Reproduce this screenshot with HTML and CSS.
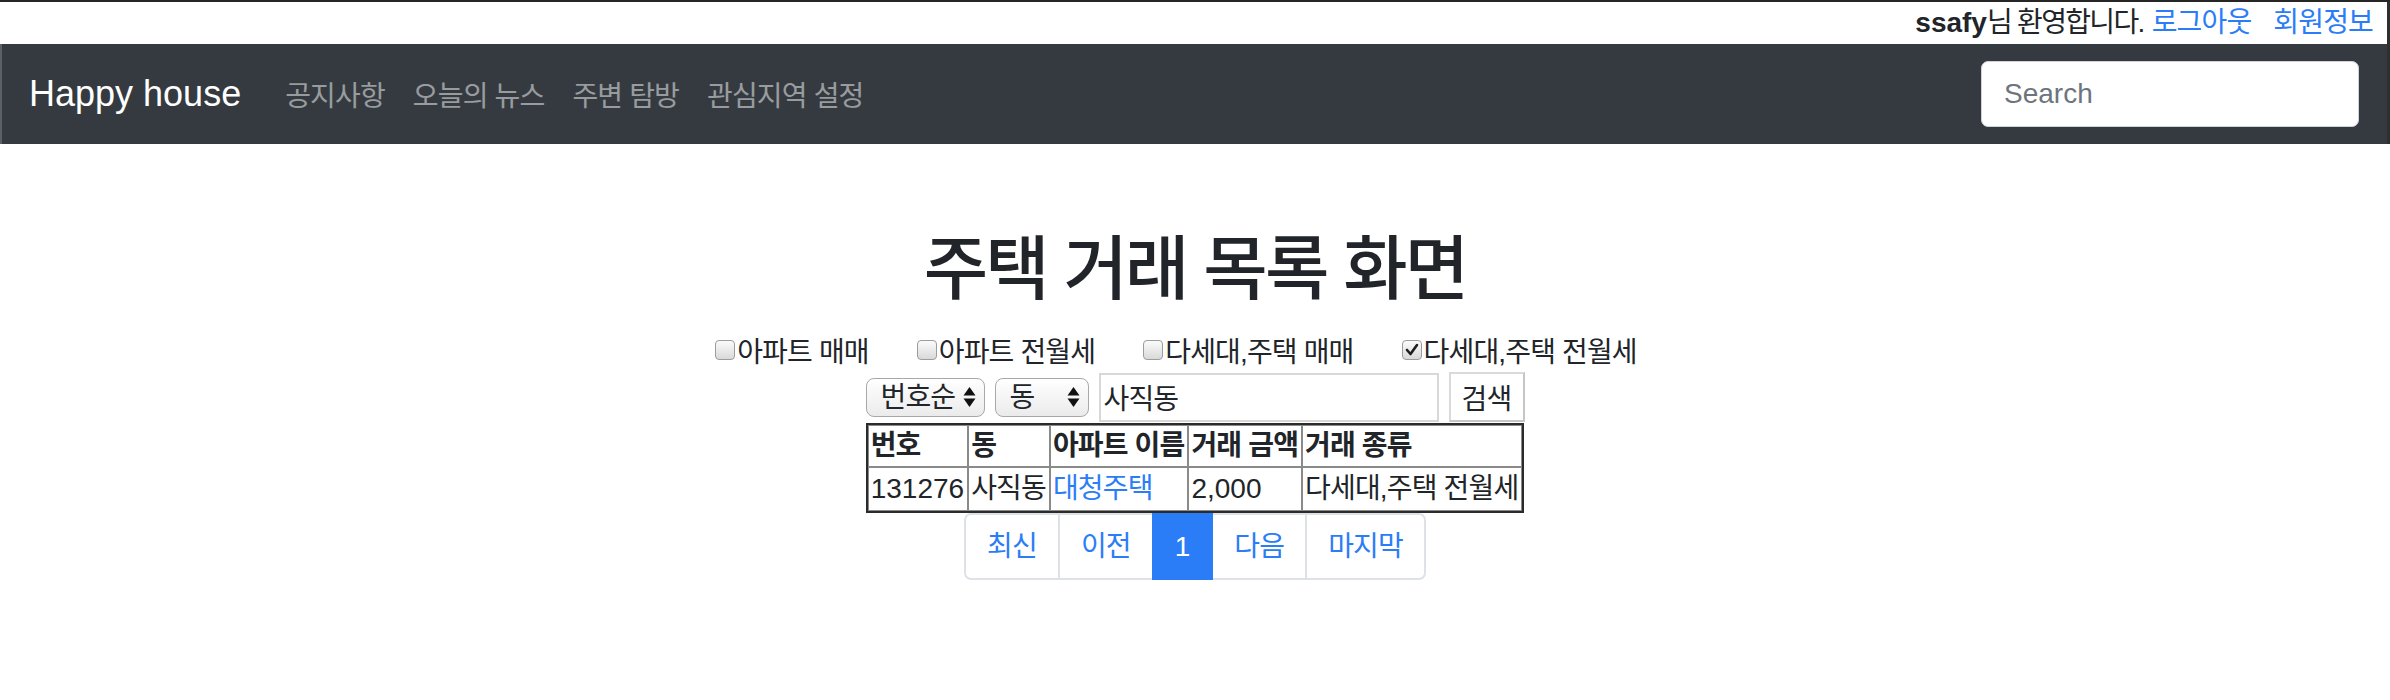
FILE: index.html
```html
<!DOCTYPE html>
<html lang="ko">
<head>
<meta charset="utf-8">
<title>Happy house</title>
<link rel="stylesheet" href="styles.css">
</head>
<body>
<div class="page">
  <header class="topbar">
    <span class="welcome"><b class="user">ssafy</b>님 환영합니다.</span>
    <a href="#" class="top-link">로그아웃</a>
    <a href="#" class="top-link">회원정보</a>
  </header>
  <nav class="navbar">
    <a class="brand" href="#">Happy house</a>
    <ul class="nav-links">
      <li><a href="#">공지사항</a></li>
      <li><a href="#">오늘의 뉴스</a></li>
      <li><a href="#">주변 탐방</a></li>
      <li><a href="#">관심지역 설정</a></li>
    </ul>
    <form class="nav-search">
      <input class="search-input" type="search" placeholder="Search">
    </form>
  </nav>
  <main class="content">
    <h1 class="title">주택 거래 목록 화면</h1>
    <div class="filters">
      <label class="filter"><span class="cb"></span>아파트 매매</label>
      <label class="filter"><span class="cb"></span>아파트 전월세</label>
      <label class="filter"><span class="cb"></span>다세대,주택 매매</label>
      <label class="filter"><span class="cb checked"><svg viewBox="0 0 20 20" width="20" height="20"><path d="M5 10 L8.5 14 L15 5" fill="none" stroke="#1e1e1e" stroke-width="2.6" stroke-linecap="round" stroke-linejoin="round"/></svg></span>다세대,주택 전월세</label>
    </div>
    <form class="search-row">
      <div class="sel sel-order">
        <select><option>번호순</option></select>
        <svg class="arrows" viewBox="0 0 13 22" width="13" height="22"><polygon points="6.5,1 12.5,9.5 0.5,9.5" fill="#111"/><polygon points="0.5,12.5 12.5,12.5 6.5,21" fill="#111"/></svg>
      </div>
      <div class="sel sel-key">
        <select><option>동</option></select>
        <svg class="arrows" viewBox="0 0 13 22" width="13" height="22"><polygon points="6.5,1 12.5,9.5 0.5,9.5" fill="#111"/><polygon points="0.5,12.5 12.5,12.5 6.5,21" fill="#111"/></svg>
      </div>
      <input class="keyword" type="text" value="사직동">
      <button class="btn-search" type="button">검색</button>
    </form>
    <table class="deals">
      <thead>
        <tr><th>번호</th><th>동</th><th>아파트 이름</th><th>거래 금액</th><th>거래 종류</th></tr>
      </thead>
      <tbody>
        <tr><td class="num">131276</td><td>사직동</td><td><a href="#" class="apt-link">대청주택</a></td><td class="num">2,000</td><td>다세대,주택 전월세</td></tr>
      </tbody>
    </table>
    <ul class="pagination">
      <li><a href="#" class="page-link first">최신</a></li>
      <li><a href="#" class="page-link">이전</a></li>
      <li><a href="#" class="page-link active num">1</a></li>
      <li><a href="#" class="page-link">다음</a></li>
      <li><a href="#" class="page-link last">마지막</a></li>
    </ul>
  </main>
</div>
</body>
</html>
```

FILE: styles.css
```css
html, body {
  margin: 0;
  padding: 0;
  background: #fff;
}

body {
  font-family: "Liberation Sans", "Noto Sans CJK KR", sans-serif;
  font-size: 28px;
  color: #212529;
  letter-spacing: -0.03em;
}

.page {
  border-top: 2px solid #262626;
}

/* top welcome bar */
.topbar {
  display: flex;
  justify-content: flex-end;
  align-items: center;
  height: 42px;
  line-height: 42px;
  padding-right: 14px;
  border-right: 3px solid #2f2f2f;
}

.welcome {
  letter-spacing: -0.06em;
}

.user {
  font-weight: 700;
  letter-spacing: 0;
}

.top-link {
  color: #2b7df7;
  text-decoration: none;
  margin-left: 8px;
}

.top-link + .top-link {
  margin-left: 22px;
}

/* navbar */
.navbar {
  display: flex;
  align-items: center;
  height: 100px;
  background: #343a40;
  border-left: 2px solid #5c6066;
  border-right: 3px solid #2f2f2f;
  padding: 0 28px 0 27px;
}

.brand {
  font-size: 36px;
  color: #fff;
  letter-spacing: 0;
  text-decoration: none;
  margin-right: 30px;
}

.nav-links {
  display: flex;
  flex: 1;
  list-style: none;
  margin: 0;
  padding: 0;
}

.nav-links a {
  display: block;
  padding: 0 14px;
  color: rgba(255, 255, 255, 0.5);
  text-decoration: none;
}

.nav-search {
  margin: 0;
}

.search-input {
  display: block;
  width: 378px;
  height: 66px;
  box-sizing: border-box;
  border: 1px solid #ced4da;
  border-radius: 7px;
  padding: 0 22px;
  font-family: inherit;
  font-size: 28px;
  letter-spacing: 0;
  color: #495057;
  background: #fff;
  outline: none;
}

.search-input::placeholder {
  color: #6c757d;
}

/* content */
.content {
  display: flex;
  flex-direction: column;
  align-items: center;
}

.title {
  font-size: 70px;
  font-weight: 500;
  line-height: 84px;
  letter-spacing: -0.04em;
  margin: 84px 0 17px;
}

.filters {
  display: flex;
  align-items: center;
  gap: 48px;
  height: 42px;
  padding-right: 38px;
}

.filter {
  display: flex;
  align-items: center;
}

.cb {
  display: block;
  width: 20px;
  height: 20px;
  box-sizing: border-box;
  border: 1px solid #9c9c9c;
  border-radius: 4px;
  background: linear-gradient(#fbfbfb, #d9d9d9);
  margin-right: 2px;
  position: relative;
}

.cb svg {
  position: absolute;
  left: -1px;
  top: -1px;
}

.search-row {
  display: flex;
  align-items: center;
  gap: 10px;
  margin: 1px 0 0;
}

.sel {
  position: relative;
}

.sel select {
  display: block;
  appearance: none;
  -webkit-appearance: none;
  height: 39px;
  box-sizing: border-box;
  border: 1.5px solid #a8a8a8;
  border-radius: 8px;
  background: linear-gradient(#ffffff, #ebebeb);
  font-family: inherit;
  font-size: 28px;
  letter-spacing: -0.03em;
  color: #212529;
  padding: 0 0 0 14px;
}

.sel-order select {
  width: 119px;
}

.sel-key select {
  width: 94px;
}

.sel .arrows {
  position: absolute;
  right: 9px;
  top: 8px;
  pointer-events: none;
}

.keyword {
  display: block;
  width: 340px;
  height: 49px;
  box-sizing: border-box;
  border: 2px solid #d8d8d8;
  font-family: inherit;
  font-size: 28px;
  letter-spacing: -0.03em;
  color: #212529;
  padding: 0 3px;
  outline: none;
}

.btn-search {
  display: block;
  width: 76px;
  height: 50px;
  box-sizing: border-box;
  border: 2px solid #dadada;
  border-right-color: #c6c6c6;
  border-bottom-color: #c6c6c6;
  background: #fff;
  font-family: inherit;
  font-size: 28px;
  letter-spacing: -0.03em;
  color: #212529;
  padding: 0;
}

/* table */
.deals {
  border-collapse: separate;
  border-spacing: 0;
  border: 2px solid #2b2b2b;
  margin-top: 1px;
}

.deals th,
.deals td {
  border: 1px solid #8a8a8a;
  padding: 0 3px 0 2px;
  white-space: nowrap;
  text-align: left;
}

.deals th {
  font-weight: 700;
  line-height: 40px;
}

.deals td {
  line-height: 42px;
}

.num {
  letter-spacing: 0;
}

.apt-link {
  color: #2b7df7;
  text-decoration: none;
}

/* pagination */
.pagination {
  display: flex;
  list-style: none;
  margin: 0;
  padding: 0;
}

.page-link {
  display: block;
  padding: 14px 21px;
  line-height: 35px;
  color: #2b7df7;
  background: #fff;
  border: 2px solid #dee2e6;
  margin-left: -2px;
  text-decoration: none;
}

.page-link.first {
  margin-left: 0;
  border-radius: 7px 0 0 7px;
}

.page-link.last {
  border-radius: 0 7px 7px 0;
}

.page-link.active {
  background: #2b7df7;
  border-color: #2b7df7;
  color: #fff;
  position: relative;
}
```
